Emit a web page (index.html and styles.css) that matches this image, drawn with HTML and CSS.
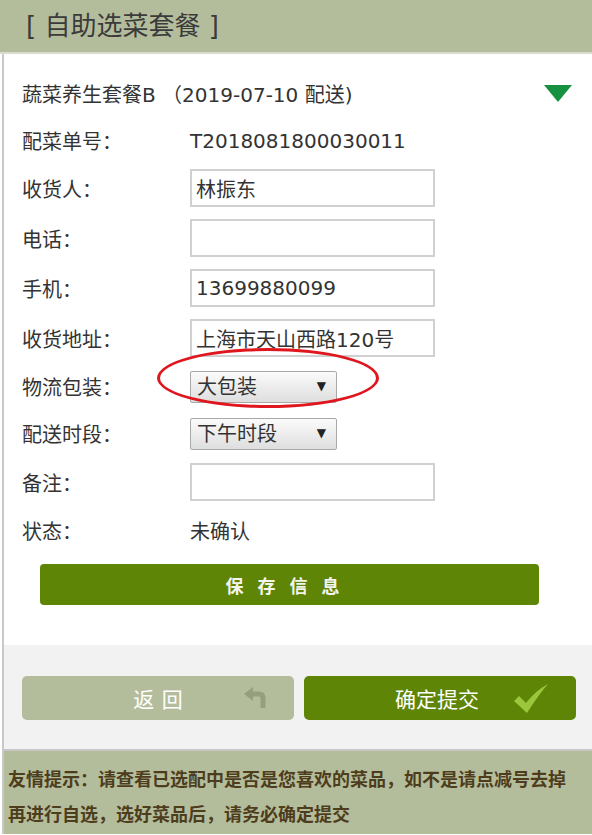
FILE: index.html
```html
<!DOCTYPE html>
<html lang="zh-CN">
<head>
  <meta charset="UTF-8">
  <meta name="viewport" content="width=device-width, initial-scale=1">
  <title>自助选菜套餐</title>
  <link rel="stylesheet" href="styles.css">
</head>
<body>
  <div class="top">[ 自助选菜套餐 ]</div>

  <div class="page">
    <div class="form">
      <div class="row title-row">
        <span>蔬菜养生套餐B （2019-07-10 配送)</span>
        <span class="fold"></span>
      </div>
      <div class="row h45">
        <label>配菜单号：</label><span>T2018081800030011</span>
      </div>
      <div class="row h50">
        <label>收货人：</label><input type="text" value="林振东">
      </div>
      <div class="row h50">
        <label>电话：</label><input type="text" value="">
      </div>
      <div class="row h50">
        <label>手机：</label><input type="text" value="13699880099">
      </div>
      <div class="row h50">
        <label>收货地址：</label><input type="text" value="上海市天山西路120号">
      </div>
      <div class="row h47">
        <label>物流包装：</label>
        <span class="pick"><select><option>大包装</option><option>小包装</option></select></span>
      </div>
      <div class="row h47">
        <label>配送时段：</label>
        <span class="pick"><select><option>下午时段</option><option>上午时段</option></select></span>
      </div>
      <div class="row h50">
        <label>备注：</label><input type="text" value="">
      </div>
      <div class="row h46">
        <label>状态：</label><span>未确认</span>
      </div>
      <button class="save">保存信息</button>
    </div>

    <div class="actions">
      <button class="btn back">返 回
        <svg class="ico-back" width="24" height="21" viewBox="0 0 24 21">
          <path d="M1 7 L10 0 L10 14 Z" fill="#949f80"/>
          <path d="M8 7 H16 Q20 7 20 11 V21" fill="none" stroke="#949f80" stroke-width="5"/>
        </svg>
      </button>
      <button class="btn submit">确定提交
        <svg class="ico-ok" width="34" height="29" viewBox="0 0 34 29">
          <path d="M0 17 L5 12 L12 19 Q21 7 34 0 Q25 10 13 29 Z" fill="#9bc73c"/>
        </svg>
      </button>
    </div>

    <div class="tips">
      友情提示：请查看已选配中是否是您喜欢的菜品，如不是请点减号去掉<br>
      再进行自选，选好菜品后，请务必确定提交
    </div>
  </div>

  <div class="mark"></div>
</body>
</html>
```

FILE: styles.css
```css
body {
  margin: 0;
  font-family: "DejaVu Sans", "Noto Sans CJK SC", sans-serif;
  color: #333;
  background: #fff;
}

.top {
  height: 52px;
  line-height: 52px;
  background: #b4bd9b;
  padding-left: 26px;
  font-size: 26px;
  color: #3b3b3b;
  border-bottom: 2px solid #d9dbd2;
}

.page {
  margin-left: 2px;
  border-left: 2px solid #c8c8c8;
}

.form {
  padding: 14px 18px 40px 18px;
}

.row {
  display: flex;
  align-items: center;
  font-size: 20px;
}

.row label {
  width: 168px;
  flex-shrink: 0;
}

.title-row {
  height: 50px;
  justify-content: space-between;
}

.h45 { height: 45px; }
.h46 { height: 46px; }
.h47 { height: 47px; }
.h50 { height: 50px; }

.fold {
  width: 0;
  height: 0;
  border-left: 14px solid transparent;
  border-right: 14px solid transparent;
  border-top: 17px solid #16913f;
  margin-right: 2px;
}

.row input {
  box-sizing: border-box;
  width: 245px;
  height: 38px;
  border: 2px solid #d0d0d0;
  padding: 0 4px;
  font: inherit;
  font-size: 20px;
  color: #333;
  outline: none;
}

.pick {
  position: relative;
  display: inline-block;
}

.pick select {
  box-sizing: border-box;
  width: 147px;
  height: 32px;
  border: 1px solid #a9a9a9;
  border-radius: 2px;
  padding: 0 0 0 6px;
  font: inherit;
  font-size: 20px;
  color: #333;
  background: linear-gradient(#fbfbfb, #dedede);
  -webkit-appearance: none;
  appearance: none;
}

.pick::after {
  content: "▼";
  position: absolute;
  right: 11px;
  top: 8px;
  font-size: 12px;
  color: #222;
  pointer-events: none;
}

.save {
  display: block;
  margin: 11px 0 0 18px;
  width: 499px;
  height: 41px;
  border: none;
  border-radius: 4px;
  background: #5e8506;
  color: #f4f4ee;
  font-family: "Noto Sans CJK SC", sans-serif;
  font-size: 18px;
  font-weight: bold;
  letter-spacing: 14px;
  cursor: pointer;
}

.actions {
  display: flex;
  gap: 10px;
  background: #f2f2f2;
  padding: 31px 16px 29px 18px;
  border-bottom: 2px solid #c8c8c8;
}

.btn {
  position: relative;
  display: flex;
  align-items: center;
  justify-content: center;
  width: 272px;
  height: 44px;
  border: none;
  border-radius: 5px;
  font-family: "Noto Sans CJK SC", sans-serif;
  font-size: 21px;
  color: #fff;
  cursor: pointer;
}

.back {
  background: #b4bd9b;
  word-spacing: 3px;
}

.submit {
  background: #5e8506;
  padding-right: 12px;
}

.ico-back {
  position: absolute;
  right: 27px;
  top: 11px;
}

.ico-ok {
  position: absolute;
  right: 28px;
  top: 8px;
}

.tips {
  background: #b4bd9b;
  padding: 10px 0 3px 4px;
  font-family: "Noto Sans CJK SC", sans-serif;
  font-size: 18px;
  font-weight: bold;
  line-height: 35px;
  color: #4e3d1c;
  white-space: nowrap;
}

.mark {
  position: absolute;
  left: 157px;
  top: 348px;
  width: 216px;
  height: 54px;
  border: 3px solid #e0161f;
  border-radius: 50%;
  pointer-events: none;
}
```
